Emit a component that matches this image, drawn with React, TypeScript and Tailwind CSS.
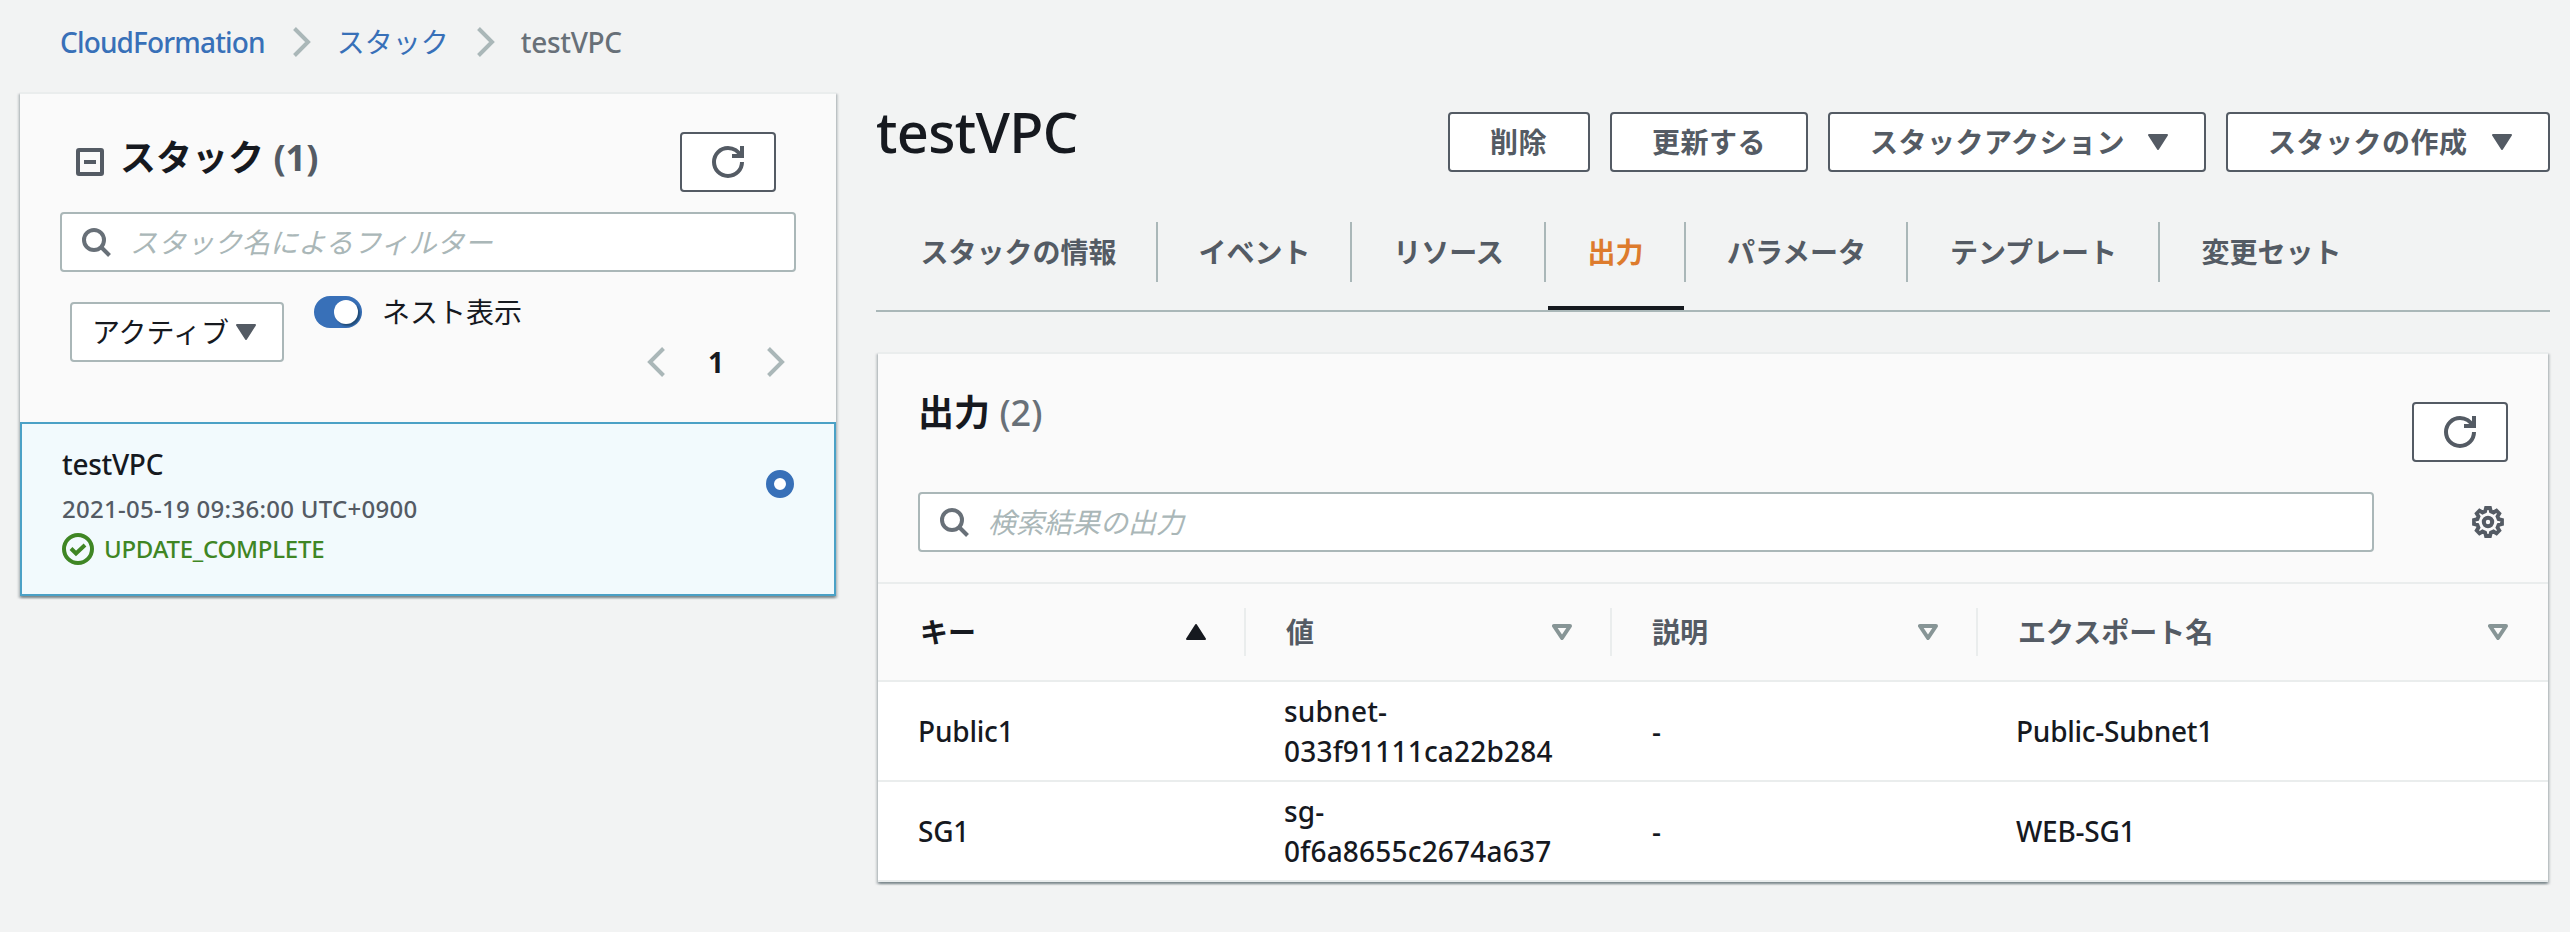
import React, { useState } from 'react';
import clsx from 'clsx';

interface OutputRow {
  key: string;
  value: string;
  description: string;
  exportName: string;
}

const tabs = [
  { label: 'スタックの情報', width: 'w-[282px]' },
  { label: 'イベント', width: 'w-[194px]' },
  { label: 'リソース', width: 'w-[194px]' },
  { label: '出力', width: 'w-[140px]' },
  { label: 'パラメータ', width: 'w-[222px]' },
  { label: 'テンプレート', width: 'w-[252px]' },
  { label: '変更セット', width: 'w-[222px]' },
];

const outputs: OutputRow[] = [
  { key: 'Public1', value: 'subnet-033f91111ca22b284', description: '-', exportName: 'Public-Subnet1' },
  { key: 'SG1', value: 'sg-0f6a8655c2674a637', description: '-', exportName: 'WEB-SG1' },
];

const panelShadow =
  'shadow-[0_2px_2px_0_rgba(0,28,36,0.3),2px_2px_2px_0_rgba(0,28,36,0.15),-2px_2px_2px_0_rgba(0,28,36,0.15)]';

const RefreshIcon = () => (
  <svg viewBox="0 0 16 16" className="size-8 fill-none stroke-[#545b64] stroke-2">
    <path d="M15 8c0 3.9-3.1 7-7 7s-7-3.1-7-7 3.1-7 7-7c2.8 0 5.3 1.7 6.4 4" />
    <path d="M10 5h5V0" />
  </svg>
);

const SearchIcon = () => (
  <svg viewBox="0 0 32 32" className="size-8 fill-none stroke-[#687078] stroke-4">
    <circle cx="14" cy="14" r="10" />
    <path d="m20.5 20.5 9 9" />
  </svg>
);

const GearIcon = () => (
  <svg viewBox="0 0 32 32" className="size-8 fill-none stroke-[#545b64]">
    <path
      strokeWidth="3.8"
      d="M14 2h4l.9 3.4 2.6 1.1 3-1.8 2.8 2.8-1.8 3 1.1 2.6 3.4.9v4l-3.4.9-1.1 2.6 1.8 3-2.8 2.8-3-1.8-2.6 1.1L18 30h-4l-.9-3.4-2.6-1.1-3 1.8-2.8-2.8 1.8-3-1.1-2.6L2 18v-4l3.4-.9 1.1-2.6-1.8-3 2.8-2.8 3 1.8 2.6-1.1z"
    />
    <circle cx="16" cy="16" r="4.2" strokeWidth="4" />
  </svg>
);

const CheckIcon = () => (
  <svg viewBox="0 0 32 32" className="size-8 fill-none stroke-[#3f8624] stroke-4">
    <circle cx="16" cy="16" r="14" />
    <path d="m9 15.5 5 5 9-8.5" />
  </svg>
);

const Chevron = ({ flip, className }: { flip?: boolean; className?: string }) => (
  <svg
    viewBox="0 0 18 30"
    className={clsx('h-[30px] w-[18px] fill-none stroke-[#aab7b8] stroke-4', flip && 'rotate-180', className)}
  >
    <path d="M1.5 1.5 15 15 1.5 28.5" />
  </svg>
);

const Caret = ({ className }: { className?: string }) => (
  <svg viewBox="0 0 20 16" className={clsx('h-4 w-5 fill-[#545b64] stroke-[#545b64] stroke-2', className)}>
    <path d="M1 1h18l-9 14z" strokeLinejoin="round" />
  </svg>
);

const SortIcon = ({ active }: { active?: boolean }) =>
  active ? (
    <svg viewBox="0 0 20 16" className="h-4 w-5 fill-[#16191f] stroke-[#16191f] stroke-2">
      <path d="M1 15h18L10 1z" strokeLinejoin="round" />
    </svg>
  ) : (
    <svg viewBox="0 0 20 16" className="h-4 w-5 fill-none stroke-[#879596] stroke-4">
      <path d="M2 2h16l-8 12z" strokeLinejoin="round" />
    </svg>
  );

const Button = ({ children, className }: { children: React.ReactNode; className?: string }) => (
  <button
    className={clsx(
      'flex h-[60px] shrink-0 items-center rounded border-2 border-[#545b64] bg-white pl-10 font-bold tracking-[0.5px] text-[#545b64]',
      className,
    )}
  >
    {children}
  </button>
);

const RefreshButton = ({ className }: { className?: string }) => (
  <button
    className={clsx(
      'flex h-[60px] w-24 shrink-0 items-center justify-center rounded border-2 border-[#545b64] bg-white',
      className,
    )}
  >
    <RefreshIcon />
  </button>
);

const SearchBox = ({ placeholder, className }: { placeholder: string; className?: string }) => (
  <div
    className={clsx('flex h-[60px] items-center gap-[18px] rounded border-2 border-[#aab7b8] bg-white pl-[18px]', className)}
  >
    <SearchIcon />
    <input
      placeholder={placeholder}
      className="h-full flex-1 bg-transparent outline-none placeholder:italic placeholder:text-[#aab7b8]"
    />
  </div>
);

const StackList = () => (
  <section className={clsx('w-[816px] border-t-2 border-[#eaeded] bg-[#fafafa]', panelShadow)}>
    <div className="flex h-[328px] flex-col pl-10">
      <div className="flex h-[118px] items-start pt-[38px]">
        <span className="mt-4 ml-4 flex size-7 items-center justify-center rounded-[3px] border-4 border-[#545b64]">
          <span className="h-1 w-3 bg-[#545b64]" />
        </span>
        <h2 className="-mt-px ml-4 text-[36px] leading-[54px] font-bold text-[#16191f]">
          スタック <span className="text-[#545b64]">(1)</span>
        </h2>
        <RefreshButton className="mr-[60px] ml-auto" />
      </div>
      <SearchBox placeholder="スタック名によるフィルター" className="w-[736px]" />
      <div className="flex items-start pl-[10px]">
        <button className="mt-[30px] flex h-[60px] w-[214px] items-center rounded border-2 border-[#aab7b8] bg-white pl-5 text-[#16191f]">
          アクティブ
          <Caret className="ml-[7px]" />
        </button>
        <span className="mt-6 ml-[30px] flex h-8 w-12 items-center justify-end rounded-full bg-[#3870b8] pr-1">
          <span className="size-6 rounded-full bg-white shadow-[2px_2px_2px_rgba(0,28,36,0.45)]" />
        </span>
        <span className="mt-5 ml-5 text-[#16191f]">ネスト表示</span>
        <div className="mt-[75px] ml-auto flex items-center pr-[51px]">
          <Chevron flip />
          <span className="w-[102px] text-center leading-[30px] font-bold text-[#16191f]">1</span>
          <Chevron />
        </div>
      </div>
    </div>
    <div className="flex h-[174px] items-center justify-between border-2 border-[#4ba1c6] bg-[#f2fafd] pr-10 pl-10">
      <div className="pb-2">
        <p className="leading-[44px] font-medium tracking-[-0.3px] text-[#16191f]">testVPC</p>
        <p className="mt-[3px] text-2xl leading-10 font-medium tracking-[0.28px] text-[#545b64]">
          2021-05-19 09:36:00 UTC+0900
        </p>
        <p className="flex items-center gap-[10px] text-2xl leading-10 font-medium tracking-[-0.25px] text-[#3f8624]">
          <CheckIcon />
          UPDATE_COMPLETE
        </p>
      </div>
      <span className="mb-[50px] size-7 rounded-full border-8 border-[#3870b8] bg-white" />
    </div>
  </section>
);

const OutputsPanel = () => (
  <section className={clsx('ml-0.5 w-[1670px] border-t-2 border-[#eaeded] bg-[#fafafa]', panelShadow)}>
    <div className="h-[228px] pl-10">
      <div className="flex h-[138px] items-start">
        <h2 className="mt-8 text-[36px] leading-[54px] font-bold text-[#16191f]">
          出力 <span className="font-medium text-[#687078]">(2)</span>
        </h2>
        <RefreshButton className="mt-12 mr-10 ml-auto" />
      </div>
      <div className="flex items-center">
        <SearchBox placeholder="検索結果の出力" className="w-[1456px]" />
        <span className="ml-[98px]">
          <GearIcon />
        </span>
      </div>
    </div>
    <table className="w-full table-fixed border-collapse text-left">
      <thead>
        <tr className="h-[98px] border-y-2 border-[#eaeded] text-[#545b64]">
          <th className="w-[368px] p-0">
            <div className="flex h-12 items-center justify-between border-r-2 border-[#eaeded] pr-[38px] pl-[42px] text-[#16191f]">
              キー
              <SortIcon active />
            </div>
          </th>
          <th className="w-[366px] p-0">
            <div className="flex h-12 items-center justify-between border-r-2 border-[#eaeded] pr-[38px] pl-10">
              値
              <SortIcon />
            </div>
          </th>
          <th className="w-[366px] p-0">
            <div className="flex h-12 items-center justify-between border-r-2 border-[#eaeded] pr-[38px] pl-10">
              説明
              <SortIcon />
            </div>
          </th>
          <th className="p-0">
            <div className="flex h-12 items-center justify-between pr-10 pl-10">
              エクスポート名
              <SortIcon />
            </div>
          </th>
        </tr>
      </thead>
      <tbody>
        {outputs.map((row) => (
          <tr key={row.key} className="h-[100px] border-b-2 border-[#eaeded] bg-white font-medium text-[#16191f]">
            <td className="py-0 pr-10 pl-10 tracking-[-0.2px]">{row.key}</td>
            <td className="py-0 pr-10 pl-[38px] tracking-[0.2px]">{row.value}</td>
            <td className="py-0 pr-10 pl-10">{row.description}</td>
            <td className="py-0 pr-10 pl-[38px] tracking-[-0.25px]">{row.exportName}</td>
          </tr>
        ))}
      </tbody>
    </table>
  </section>
);

export default function App() {
  const [activeTab] = useState('出力');

  return (
    <div className="flex h-[932px] w-[2570px] gap-10 overflow-hidden bg-[#f2f3f3] pl-5 font-['Noto_Sans','Noto_Sans_CJK_JP',sans-serif] text-[28px] leading-10">
      <div>
        <nav className="flex h-[92px] items-center pb-2 pl-10">
          <a className="font-medium tracking-[-0.85px] text-[#3870b8]">CloudFormation</a>
          <Chevron className="ml-7" />
          <a className="ml-[26px] text-[#3870b8]">スタック</a>
          <Chevron className="ml-7" />
          <span className="ml-[26px] font-medium tracking-[-0.3px] text-[#687078]">testVPC</span>
        </nav>
        <StackList />
      </div>

      <main className="w-[1674px] pt-28">
        <header className="flex justify-end gap-5">
          <h1 className="-mt-[17px] mr-auto text-[56px] leading-[72px] font-medium tracking-[-0.7px] text-[#16191f]">
            testVPC
          </h1>
          <Button className="w-[142px]">削除</Button>
          <Button className="w-[198px]">更新する</Button>
          <Button className="w-[378px]">
            スタックアクション
            <Caret className="ml-[23px]" />
          </Button>
          <Button className="w-[324px]">
            スタックの作成
            <Caret className="ml-6" />
          </Button>
        </header>

        <ul className="mt-[50px] flex h-[90px] border-b-2 border-[#aab7b8] font-bold text-[#545b64]">
          {tabs.map((tab, i) => (
            <li key={tab.label} className={clsx('flex flex-col justify-between', tab.width)}>
              <div
                className={clsx(
                  'flex h-[60px] items-center justify-center',
                  i < tabs.length - 1 && 'border-r-2 border-[#aab7b8]',
                  i === 0 ? 'pl-[5px]' : 'pl-px',
                  tab.label === activeTab && 'text-[#dd7b2d]',
                )}
              >
                {tab.label}
              </div>
              {tab.label === activeTab && <div className="mx-0.5 h-1 bg-[#16191f]" />}
            </li>
          ))}
        </ul>

        <div className="mt-10">
          <OutputsPanel />
        </div>
      </main>
    </div>
  );
}
